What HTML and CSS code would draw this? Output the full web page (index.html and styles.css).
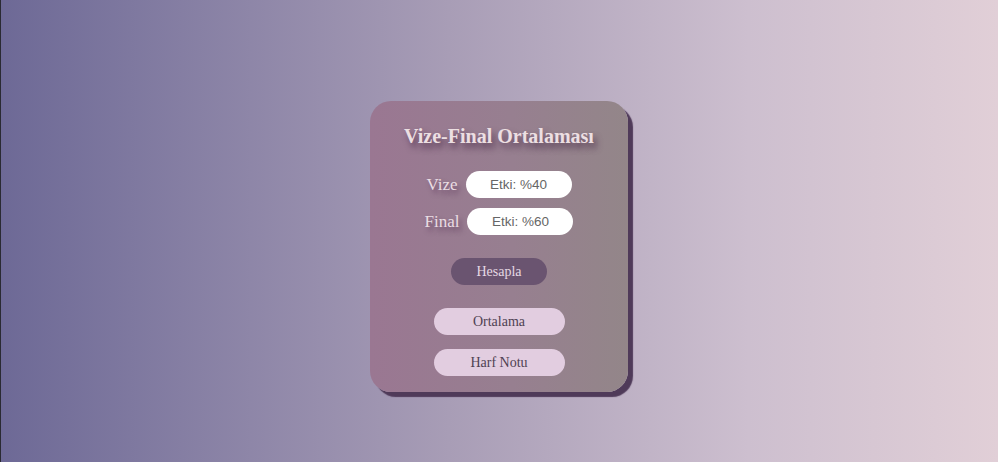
FILE: index.html
```html
<!DOCTYPE html>
<html lang="tr">
<head>
<meta charset="utf-8">
<title>Vize-Final Ortalaması</title>
<link rel="stylesheet" href="styles.css">
</head>
<body>
<main class="page">
  <section class="card">
    <h1 class="title">Vize-Final Ortalaması</h1>
    <div class="row row-vize">
      <label class="label" for="vize">Vize</label>
      <input class="field" id="vize" type="text" placeholder="Etki: %40">
    </div>
    <div class="row row-final">
      <label class="label" for="final">Final</label>
      <input class="field" id="final" type="text" placeholder="Etki: %60">
    </div>
    <button class="btn btn-dark" type="button">Hesapla</button>
    <button class="btn btn-light btn-first" type="button">Ortalama</button>
    <button class="btn btn-light btn-second" type="button">Harf Notu</button>
  </section>
</main>
</body>
</html>
```

FILE: styles.css
```css
* { box-sizing: border-box; }
html, body { height: 100%; }
body {
  margin: 0;
  font-family: "Liberation Serif", "DejaVu Serif", serif;
  background: linear-gradient(to right, #6d6996 0%, #a89db6 45%, #cdbfcf 75%, #e1cfd7 100%);
  box-shadow: inset 1px 0 0 #2a2a33;
}
.page {
  height: 462px;
  display: flex;
  justify-content: center;
  padding-top: 101px;
}
.card {
  width: 258px;
  height: 291px;
  border-radius: 21px;
  background: linear-gradient(to right, #9a7792 0%, #977f90 55%, #938689 100%);
  box-shadow: 5px 5px 1px #4f3a59;
  display: flex;
  flex-direction: column;
  align-items: center;
  padding-top: 21px;
}
.title {
  margin: 0;
  font-size: 20px;
  line-height: 28px;
  font-weight: bold;
  color: #ecdfe2;
  text-shadow: 3px 5px 6px rgba(70, 40, 70, 0.75);
}
.row {
  display: flex;
  align-items: center;
  gap: 8px;
  height: 27px;
}
.row-vize { margin-top: 21px; }
.row-final { margin-top: 10px; }
.label {
  font-size: 17px;
  color: #eadde3;
  text-shadow: 3px 4px 5px rgba(80, 45, 80, 0.6);
}
.field {
  width: 106px;
  height: 27px;
  border: none;
  border-radius: 14px;
  background: #ffffff;
  text-align: center;
  font-family: "Liberation Sans", Arial, sans-serif;
  font-size: 13.5px;
  color: #555;
  outline: none;
  padding: 0 6px;
}
.field::placeholder { color: #666; }
.btn {
  border: none;
  height: 27px;
  border-radius: 14px;
  font-family: "Liberation Serif", "DejaVu Serif", serif;
  font-size: 14px;
  padding: 0;
  cursor: pointer;
}
.btn-dark {
  margin-top: 23px;
  width: 96px;
  background: #6a5470;
  color: #e6d9e4;
}
.btn-light {
  width: 131px;
  background: #e2cde0;
  color: #4f4152;
}
.btn-first { margin-top: 23px; }
.btn-second { margin-top: 14px; }
```
